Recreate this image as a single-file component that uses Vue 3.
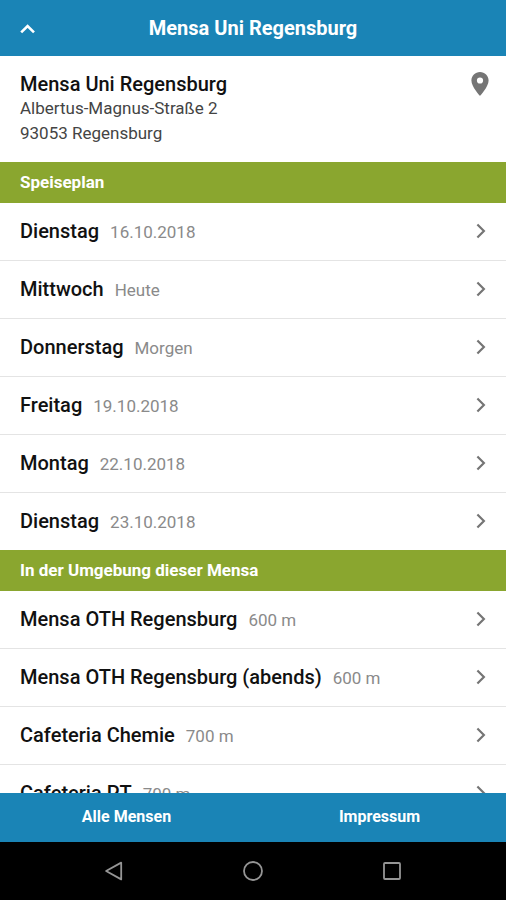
<script setup>
const days = [
  { name: 'Dienstag', note: '16.10.2018' },
  { name: 'Mittwoch', note: 'Heute' },
  { name: 'Donnerstag', note: 'Morgen' },
  { name: 'Freitag', note: '19.10.2018' },
  { name: 'Montag', note: '22.10.2018' },
  { name: 'Dienstag', note: '23.10.2018' },
]

const nearby = [
  { name: 'Mensa OTH Regensburg', note: '600 m' },
  { name: 'Mensa OTH Regensburg (abends)', note: '600 m' },
  { name: 'Cafeteria Chemie', note: '700 m' },
  { name: 'Cafeteria PT', note: '700 m' },
]

const sections = [
  { id: 'speiseplan', title: 'Speiseplan', items: days },
  { id: 'umgebung', title: 'In der Umgebung dieser Mensa', items: nearby },
]
</script>

<template>
  <div class="app">
    <header class="topbar">
      <button class="back" type="button" aria-label="Zurück">
        <svg width="16" height="16" viewBox="0 0 16 16" aria-hidden="true">
          <path d="M1.2 12.400 7.600 6 14 12.400" fill="none" stroke="currentColor" stroke-width="2.6" />
        </svg>
      </button>
      <h1 class="title">Mensa Uni Regensburg</h1>
    </header>

    <main class="content">
      <a class="place" href="#karte">
        <address class="address">
          <strong class="name">Mensa Uni Regensburg</strong>
          <span>Albertus-Magnus-Straße 2</span>
          <span>93053 Regensburg</span>
        </address>
        <svg class="pin" width="18" height="24" viewBox="0 0 18 24" aria-hidden="true">
          <path
            d="M9 0C4.2 0 .4 3.8 .4 8.5C.4 14.8 9 24 9 24S17.600 14.800 17.600 8.500C17.600 3.800 13.800 0 9 0ZM9 11.600A3.100 3.100 0 1 1 9 5.400A3.100 3.100 0 0 1 9 11.600Z"
            fill="currentColor"
          />
        </svg>
      </a>

      <section v-for="section in sections" :key="section.id">
        <h2 class="heading">{{ section.title }}</h2>
        <ul class="list">
          <li v-for="item in section.items" :key="item.name + item.note" class="item">
            <a class="row" :href="'#' + section.id">
              <span class="label">
                <span class="name">{{ item.name }}</span>
                <span class="note">{{ item.note }}</span>
              </span>
              <svg class="chevron" width="10" height="16" viewBox="0 0 10 16" aria-hidden="true">
                <path d="M1.400 1.500 7.900 8 1.400 14.500" fill="none" stroke="currentColor" stroke-width="2.200" />
              </svg>
            </a>
          </li>
        </ul>
      </section>
    </main>

    <nav class="tabs">
      <a href="#mensen">Alle Mensen</a>
      <a href="#impressum">Impressum</a>
    </nav>

    <div class="system">
      <button type="button" aria-label="Zurück">
        <svg width="20" height="20" viewBox="0 0 20 20" aria-hidden="true">
          <path d="M17.200 1.600V18.400L2.100 10Z" fill="none" stroke="currentColor" stroke-width="1.800" stroke-linejoin="round" />
        </svg>
      </button>
      <button type="button" aria-label="Startbildschirm">
        <svg width="20" height="20" viewBox="0 0 20 20" aria-hidden="true">
          <circle cx="10" cy="10" r="9" fill="none" stroke="currentColor" stroke-width="1.800" />
        </svg>
      </button>
      <button type="button" aria-label="Übersicht">
        <svg width="20" height="20" viewBox="0 0 20 20" aria-hidden="true">
          <rect x="2" y="2" width="16" height="16" rx="1" fill="none" stroke="currentColor" stroke-width="1.800" />
        </svg>
      </button>
    </div>
  </div>
</template>

<style>
body {
  margin: 0;
  background: #fff;
}
</style>

<style scoped>
.app {
  display: flex;
  flex-direction: column;
  height: 100vh;
  font-family: Roboto, "Liberation Sans", sans-serif;
  font-size: 17px;
  color: #111;
}

a {
  color: inherit;
  text-decoration: none;
}

button {
  display: grid;
  place-items: center;
  padding: 0;
  border: 0;
  background: none;
  color: inherit;
}

.topbar {
  flex: none;
  display: grid;
  grid-template-columns: 56px 1fr 56px;
  align-items: center;
  height: 56px;
  background: #1a84b6;
  color: #fff;
}

.back {
  height: 56px;
}

.title {
  margin: 0;
  font-size: 20px;
  font-weight: 700;
  line-height: 24px;
  text-align: center;
}

.content {
  flex: 1;
  min-height: 0;
  overflow-y: auto;
  scrollbar-width: none;
}

.place {
  display: flex;
  justify-content: space-between;
  padding: 16px 17px 16px 20px;
}

.address {
  display: flex;
  flex-direction: column;
  font-style: normal;
  line-height: 25px;
  color: #444;
}

.name {
  font-size: 20px;
  font-weight: 500;
  color: #111;
}

.address .name {
  line-height: 24px;
}

.pin {
  color: #757575;
}

.heading {
  margin: 0;
  padding: 0 20px;
  background: #8aa62f;
  color: #fff;
  font-size: 17px;
  font-weight: 700;
  line-height: 41px;
}

.list {
  margin: 0;
  padding: 0;
  list-style: none;
}

.item + .item {
  border-top: 1px solid #e4e4e4;
}

.row {
  display: flex;
  align-items: center;
  justify-content: space-between;
  box-sizing: border-box;
  height: 57px;
  padding: 0 20px 2px;
}

.label {
  display: flex;
  align-items: baseline;
  gap: 11px;
}

.note {
  color: #8a8a8a;
}

.chevron {
  color: #757575;
}

.tabs {
  flex: none;
  display: grid;
  grid-template-columns: 1fr 1fr;
  background: #1a84b6;
  color: #fff;
  font-size: 16px;
  font-weight: 700;
  line-height: 47px;
  padding-bottom: 2px;
  text-align: center;
}

.system {
  flex: none;
  display: grid;
  grid-template-columns: repeat(3, 1fr);
  height: 58px;
  padding: 0 44px;
  background: #000;
  color: #959595;
}
</style>
